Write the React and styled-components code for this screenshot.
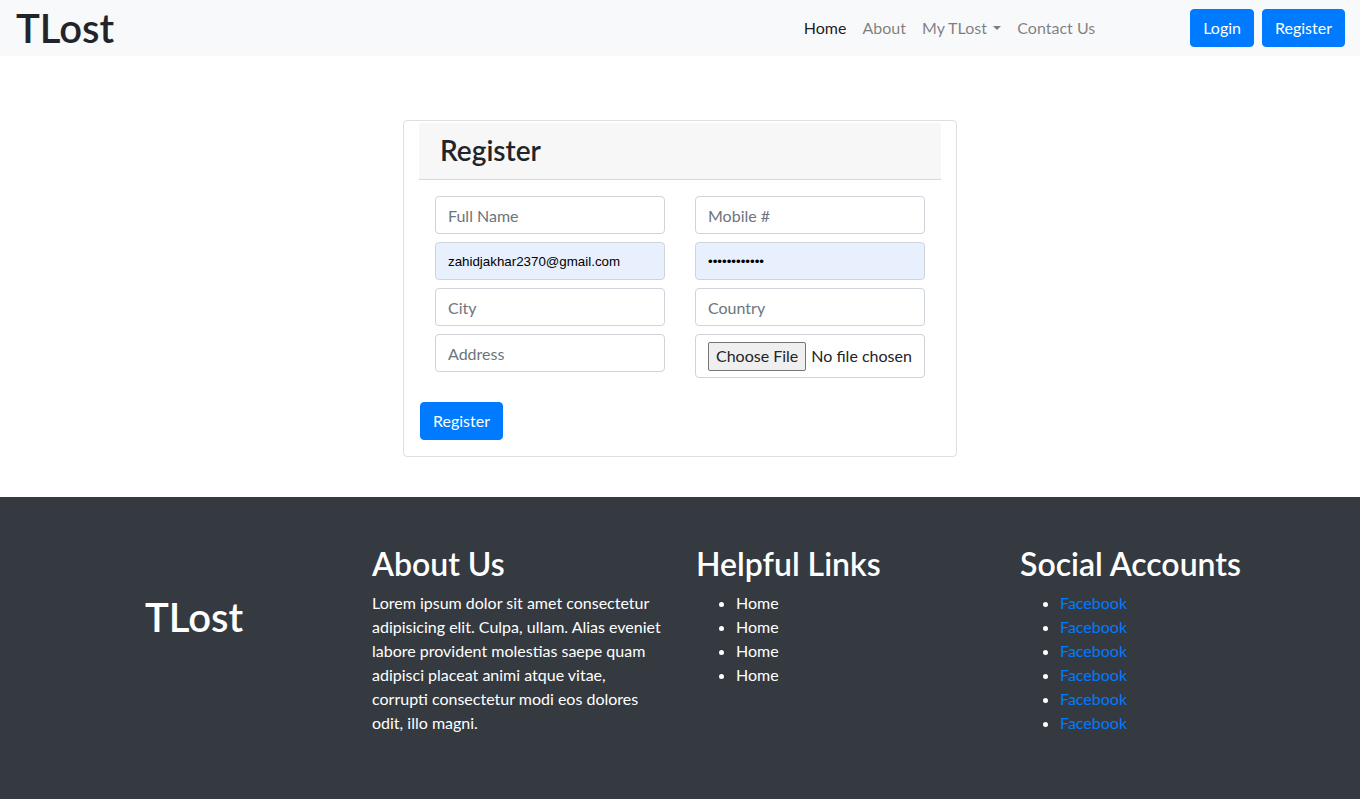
import React from "react";
import styled, { createGlobalStyle } from "styled-components";

const GlobalStyle = createGlobalStyle`
  * {
    box-sizing: border-box;
  }

  body {
    margin: 0;
    font-family: "Lato", "Segoe UI", sans-serif;
    font-size: 16px;
    line-height: 1.5;
    color: #212529;
    background: #fff;
  }
`;

const navLinks = [
  { label: "Home", active: true },
  { label: "About" },
  { label: "My TLost", dropdown: true },
  { label: "Contact Us" },
];

const helpfulLinks = ["Home", "Home", "Home", "Home"];
const socialLinks = Array.from({ length: 6 }, () => "Facebook");

const App = () => {
  return (
    <>
      <GlobalStyle />
      <Navbar>
        <Brand href="#">TLost</Brand>
        <NavList>
          {navLinks.map((link) => (
            <li key={link.label}>
              <NavLink href="#" $active={link.active}>
                {link.label}
                {link.dropdown && <Caret />}
              </NavLink>
            </li>
          ))}
        </NavList>
        <NavActions>
          <PrimaryButton>Login</PrimaryButton>
          <PrimaryButton>Register</PrimaryButton>
        </NavActions>
      </Navbar>

      <Main>
        <Card>
          <CardHeader>
            <h3>Register</h3>
          </CardHeader>
          <Form onSubmit={(e) => e.preventDefault()}>
            <FieldGrid>
              <Input type="text" placeholder="Full Name" />
              <Input type="text" placeholder="Mobile #" />
              <Input
                type="email"
                defaultValue="zahidjakhar2370@gmail.com"
                $autofill
              />
              <Input type="password" defaultValue="abcdefghijkl" $autofill />
              <Input type="text" placeholder="City" />
              <Input type="text" placeholder="Country" />
              <Input type="text" placeholder="Address" />
              <FileField>
                <input type="file" />
                <FileButton>Choose File</FileButton>
                <FileName>No file chosen</FileName>
              </FileField>
            </FieldGrid>
            <SubmitButton type="submit">Register</SubmitButton>
          </Form>
        </Card>
      </Main>

      <Footer>
        <FooterRow>
          <FooterBrand>TLost</FooterBrand>
          <FooterColumn>
            <h2>About Us</h2>
            <p>
              Lorem ipsum dolor sit amet consectetur adipisicing elit. Culpa,
              ullam. Alias eveniet labore provident molestias saepe quam
              adipisci placeat animi atque vitae, corrupti consectetur modi eos
              dolores odit, illo magni.
            </p>
          </FooterColumn>
          <FooterColumn>
            <h2>Helpful Links</h2>
            <ul>
              {helpfulLinks.map((item, index) => (
                <li key={index}>{item}</li>
              ))}
            </ul>
          </FooterColumn>
          <FooterColumn>
            <h2>Social Accounts</h2>
            <ul>
              {socialLinks.map((item, index) => (
                <li key={index}>
                  <FooterLink href="#">{item}</FooterLink>
                </li>
              ))}
            </ul>
          </FooterColumn>
        </FooterRow>
      </Footer>
    </>
  );
};

const Navbar = styled.nav`
  height: 56px;
  display: flex;
  align-items: center;
  padding: 8px 15px 8px 16px;
  background-color: #f8f9fa;
`;

const Brand = styled.a`
  font-size: 40px;
  font-weight: 600;
  line-height: 40px;
  color: #212529;
  text-decoration: none;
  margin-right: auto;
`;

const NavList = styled.ul`
  display: flex;
  list-style: none;
  margin: 0 87px 0 0;
  padding: 0;
`;

const NavLink = styled.a`
  display: block;
  padding: 8px;
  color: ${(p) => (p.$active ? "rgba(0, 0, 0, 0.9)" : "rgba(0, 0, 0, 0.5)")};
  text-decoration: none;
`;

const Caret = styled.span`
  display: inline-block;
  margin-left: 0.4em;
  vertical-align: 0.255em;
  border-top: 0.3em solid;
  border-right: 0.3em solid transparent;
  border-left: 0.3em solid transparent;
`;

const NavActions = styled.div`
  display: flex;
  gap: 8px;
`;

const PrimaryButton = styled.button`
  height: 38px;
  padding: 6px 12px;
  font-family: inherit;
  font-size: 16px;
  line-height: 1.5;
  color: #fff;
  background-color: #007bff;
  border: 1px solid #007bff;
  border-radius: 4px;
  cursor: pointer;
`;

const SubmitButton = styled(PrimaryButton)`
  margin-left: 1px;
`;

const Main = styled.main`
  display: flex;
  justify-content: center;
  padding: 64px 0 40px;
`;

const Card = styled.div`
  width: 554px;
  padding: 2px 15px 16px;
  border: 1px solid rgba(0, 0, 0, 0.125);
  border-radius: 4px;
`;

const CardHeader = styled.div`
  height: 57px;
  display: flex;
  align-items: center;
  padding: 0 21px;
  background-color: rgba(0, 0, 0, 0.03);
  border-bottom: 1px solid rgba(0, 0, 0, 0.125);

  h3 {
    margin: 0;
    font-size: 28px;
    font-weight: 600;
    line-height: 1.2;
  }
`;

const Form = styled.form`
  display: flex;
  flex-direction: column;
  align-items: flex-start;
  padding-top: 16px;
  gap: 24px;
`;

const FieldGrid = styled.div`
  width: 100%;
  display: grid;
  grid-template-columns: 230px 230px;
  column-gap: 30px;
  row-gap: 8px;
  align-items: start;
  padding: 0 16px;
`;

const Input = styled.input`
  width: 100%;
  height: 38px;
  padding: 6px 12px;
  font-family: ${(p) =>
    p.$autofill ? '"Liberation Sans", Arial, sans-serif' : "inherit"};
  font-size: ${(p) => (p.$autofill ? "13.33px" : "16px")};
  color: ${(p) => (p.$autofill ? "#000" : "#495057")};
  background-color: ${(p) => (p.$autofill ? "#e8f0fe" : "#fff")};
  border: 1px solid #ced4da;
  border-radius: 4px;
  outline: none;

  &::placeholder {
    color: #6c757d;
  }
`;

const FileField = styled.label`
  height: 44px;
  display: flex;
  align-items: center;
  gap: 5px;
  padding: 0 12px;
  border: 1px solid #ced4da;
  border-radius: 4px;
  color: #212529;

  input {
    display: none;
  }
`;

const FileButton = styled.span`
  height: 29px;
  display: flex;
  align-items: center;
  padding: 0 7px;
  background-color: #efefef;
  border: 1px solid #767676;
  border-radius: 2px;
  font-size: 16px;
`;

const FileName = styled.span`
  font-size: 16px;
  white-space: nowrap;
`;

const Footer = styled.footer`
  background-color: #343a40;
  color: #fff;
  padding: 48px 32px;
`;

const FooterRow = styled.div`
  display: grid;
  grid-template-columns: repeat(4, 1fr);
`;

const FooterBrand = styled.h1`
  margin: 48px 0 0;
  padding: 0 16px;
  text-align: center;
  font-size: 40px;
  font-weight: 600;
  line-height: 1.2;
`;

const FooterColumn = styled.div`
  padding: 0 16px;

  h2 {
    margin: 0 0 8px;
    font-size: 32px;
    font-weight: 600;
    line-height: 1.2;
  }

  p {
    margin: 0 0 16px;
  }

  ul {
    margin: 0 0 16px;
    padding-left: 40px;
  }
`;

const FooterLink = styled.a`
  color: #007bff;
  text-decoration: none;
`;

export default App;
